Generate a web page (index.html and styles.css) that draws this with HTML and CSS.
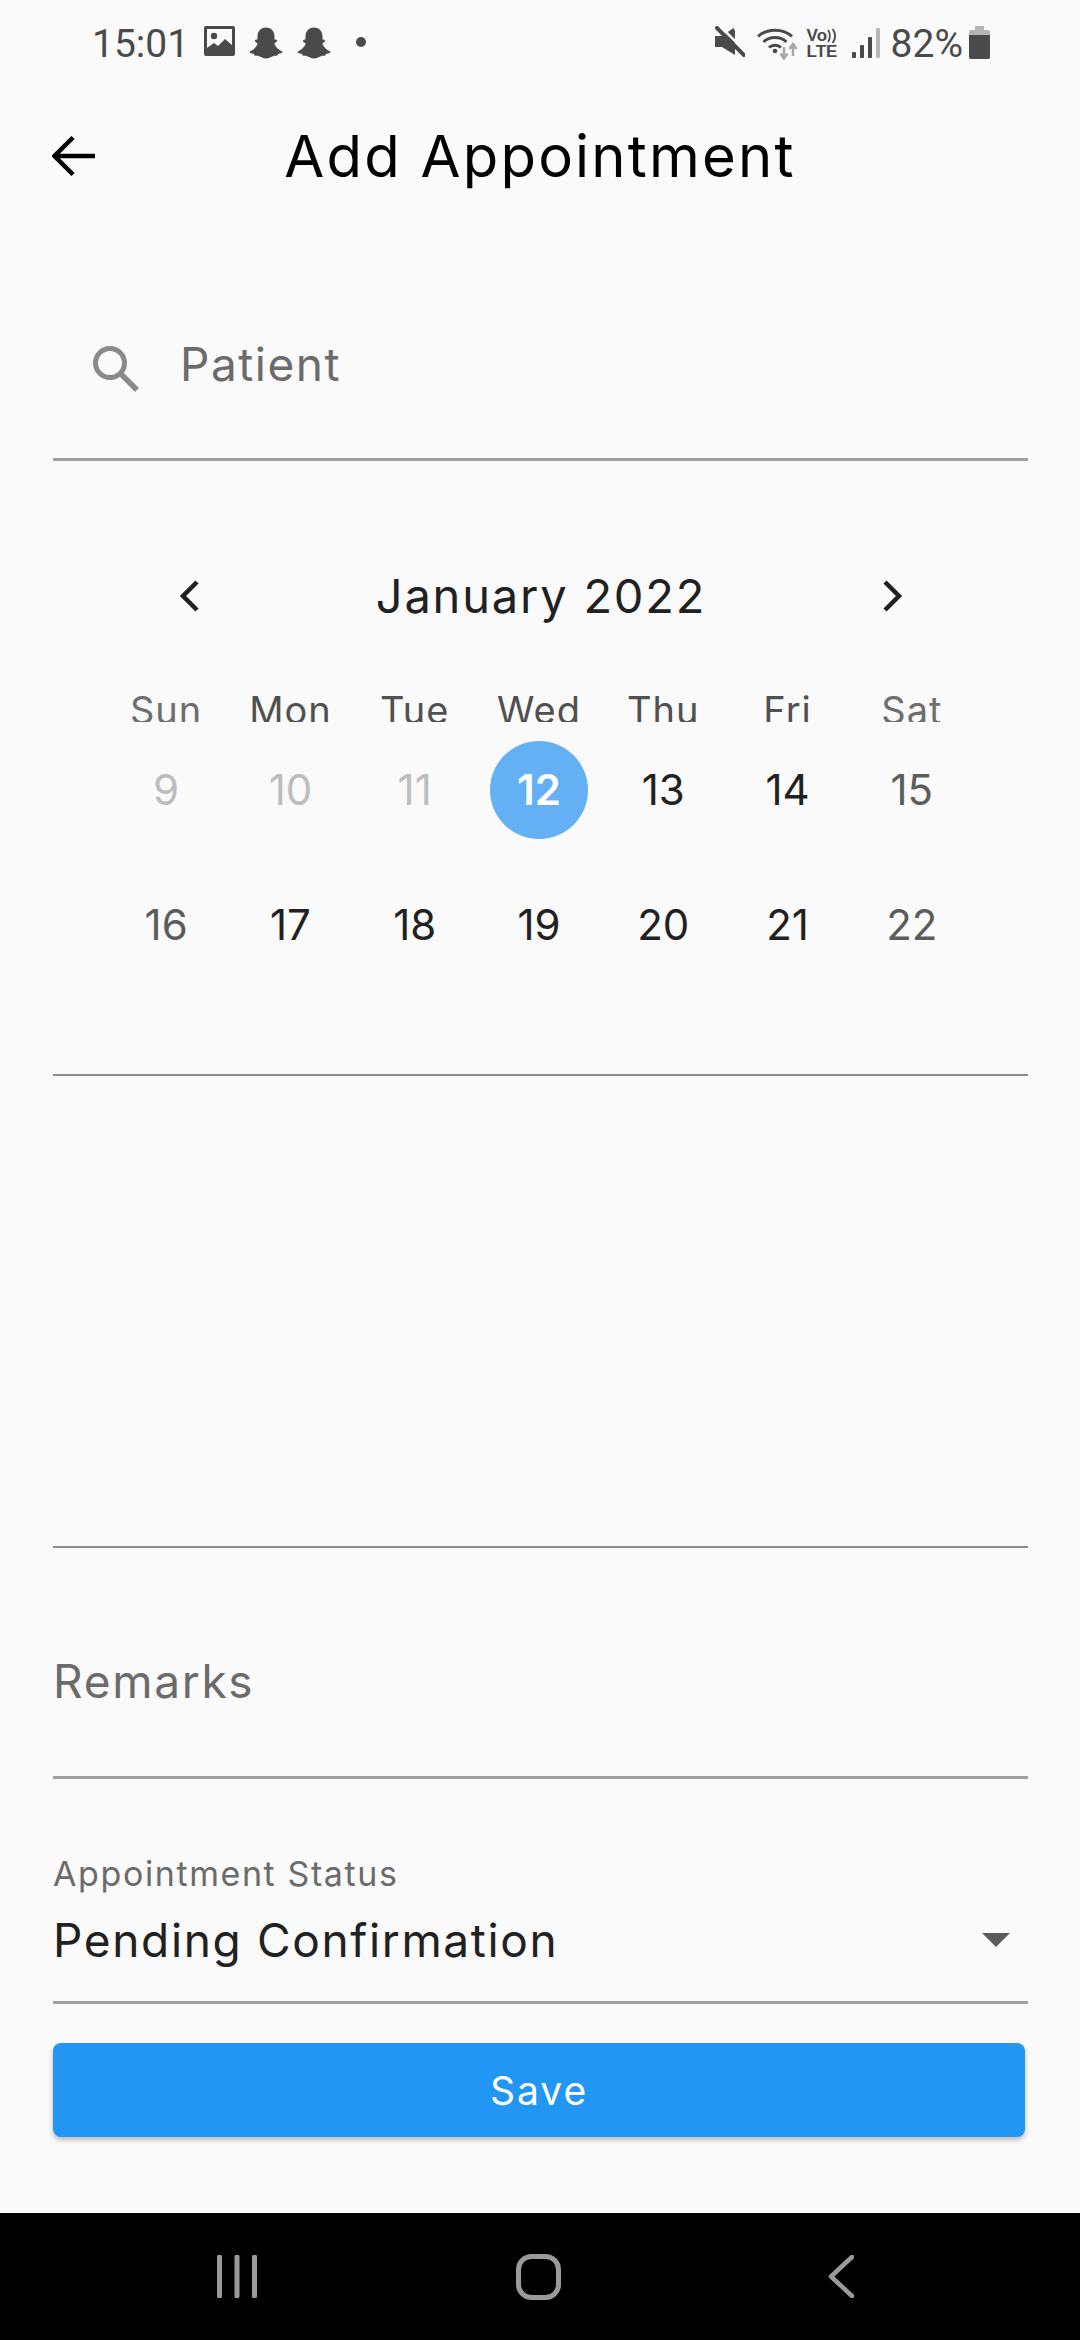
FILE: index.html
```html
<!DOCTYPE html>
<html lang="en">
<head>
    <meta charset="UTF-8">
    <meta name="viewport" content="width=device-width, initial-scale=1.0">
    <title>Add Appointment</title>
    <link rel="stylesheet" href="styles.css">
</head>
<body>
    <!-- Status Bar -->
    <div class="status-bar">
        <span class="status-time">15:01</span>
        <svg class="status-image" width="31" height="30" viewBox="0 0 31 30">
            <rect width="31" height="30" rx="2" fill="#4a4a4a"/>
            <rect x="3" y="3" width="25" height="24" fill="#fafafa"/>
            <circle cx="10" cy="10" r="3.2" fill="#4a4a4a"/>
            <path d="M3 27v-5l7-5 4 3 7-7 7 6v8z" fill="#4a4a4a"/>
        </svg>
        <svg class="status-ghost" width="34" height="32" viewBox="0 0 34 32">
            <path d="M17 .5C11.500 .5 8.500 4.500 8.500 9.500V12.500C7 12.500 5.500 13 6 14.500C6.500 15.500 8.500 15.500 8.500 16.500C8 19.500 4 23.500 .5 24.500C.5 26 2.500 26.500 5 27C5.500 28.500 6 29 7.500 28.800C10.500 28.500 12.500 31.500 17 31.500C21.500 31.500 23.500 28.500 26.500 28.800C28 29 28.500 28.500 29 27C31.500 26.500 33.500 26 33.500 24.500C30 23.500 26 19.500 25.500 16.500C25.500 15.500 27.500 15.500 28 14.500C28.500 13 27 12.500 25.500 12.500V9.500C25.500 4.500 22.500 .5 17 .5Z" fill="#4a4a4a"/>
        </svg>
        <svg class="status-ghost" width="34" height="32" viewBox="0 0 34 32">
            <path d="M17 .5C11.500 .5 8.500 4.500 8.500 9.500V12.500C7 12.500 5.500 13 6 14.500C6.500 15.500 8.500 15.500 8.500 16.500C8 19.500 4 23.500 .5 24.500C.5 26 2.500 26.500 5 27C5.500 28.500 6 29 7.500 28.800C10.500 28.500 12.500 31.500 17 31.500C21.500 31.500 23.500 28.500 26.500 28.800C28 29 28.500 28.500 29 27C31.500 26.500 33.500 26 33.500 24.500C30 23.500 26 19.500 25.500 16.500C25.500 15.500 27.500 15.500 28 14.500C28.500 13 27 12.500 25.500 12.500V9.500C25.500 4.500 22.500 .5 17 .5Z" fill="#4a4a4a"/>
        </svg>
        <span class="status-dot"></span>

        <div class="status-right">
            <svg class="status-mute" width="30" height="32" viewBox="0 0 30 32">
                <path d="M0 10h7L20 1v28L7 21H0z" fill="#4a4a4a"/>
                <path d="M18 1l3 0v6z" fill="#fafafa"/>
                <path d="M2 2l27 27" stroke="#4a4a4a" stroke-width="4" stroke-linecap="round"/>
                <path d="M6 1l25 25" stroke="#fafafa" stroke-width="2.500"/>
            </svg>
            <svg class="status-wifi" width="42" height="33" viewBox="0 0 42 33">
                <path d="M1 9.500C10 1 26 1 35 9.500" fill="none" stroke="#4a4a4a" stroke-width="3"/>
                <path d="M6.500 15C12.500 9 23.500 9 29.500 15" fill="none" stroke="#4a4a4a" stroke-width="3"/>
                <path d="M12 20.500C15 17.500 21 17.500 24 20.500" fill="none" stroke="#4a4a4a" stroke-width="3"/>
                <circle cx="18" cy="24" r="2.300" fill="#4a4a4a"/>
                <path d="M27 20v10M23.500 26.500l3.500 5 3.500-5M36 29V18M32.500 22l3.500-5 3.500 5" fill="none" stroke="#a8a8a8" stroke-width="2.500"/>
            </svg>
            <div class="status-volte">
                <span class="volte-top">Vo<svg width="9" height="14" viewBox="0 0 9 14"><path d="M1 1c2.500 3 2.500 9 0 12M5.500 0c3.500 4 3.500 10 0 14" fill="none" stroke="#4a4a4a" stroke-width="1.800"/></svg></span>
                <span class="volte-bottom">LTE</span>
            </div>
            <svg class="status-signal" width="28" height="30" viewBox="0 0 28 30">
                <rect x="0" y="24" width="4" height="6" rx="1" fill="#4a4a4a"/>
                <rect x="8" y="17" width="4" height="13" rx="1" fill="#4a4a4a"/>
                <rect x="16" y="9" width="4" height="21" rx="1" fill="#4a4a4a"/>
                <rect x="24" y="0" width="4" height="30" rx="1" fill="#b8b8b8"/>
            </svg>
            <span class="status-battery-text">82%</span>
            <svg class="status-battery" width="21" height="33" viewBox="0 0 21 33">
                <path d="M6 0h9v4h4a2 2 0 0 1 2 2v25a2 2 0 0 1-2 2H2a2 2 0 0 1-2-2V6a2 2 0 0 1 2-2h4z" fill="#b5b5b5"/>
                <path d="M0 9h21v22a2 2 0 0 1-2 2H2a2 2 0 0 1-2-2z" fill="#4a4a4a"/>
            </svg>
        </div>
    </div>

    <!-- App Bar -->
    <header class="app-bar">
        <svg class="back-arrow" width="44" height="42" viewBox="0 0 44 42">
            <path d="M43 21H4M21 2.500L2.500 21 21 39.500" fill="none" stroke="#000" stroke-width="4.500"/>
        </svg>
        <h1 class="app-title">Add Appointment</h1>
    </header>

    <main class="form">
        <!-- Patient Search -->
        <section class="search-field">
            <svg class="search-icon" width="46" height="46" viewBox="0 0 46 46">
                <circle cx="17" cy="17" r="14.500" fill="none" stroke="#8a8a8a" stroke-width="5"/>
                <path d="M27.500 27.500L44 44" stroke="#8a8a8a" stroke-width="5.500"/>
            </svg>
            <span class="search-placeholder">Patient</span>
        </section>

        <!-- Calendar -->
        <section class="calendar">
            <div class="calendar-head">
                <svg width="20" height="32" viewBox="0 0 20 32"><path d="M18 2L4 16l14 14" fill="none" stroke="#212121" stroke-width="4.500"/></svg>
                <span class="calendar-month">January 2022</span>
                <svg width="20" height="32" viewBox="0 0 20 32"><path d="M2 2l14 14L2 30" fill="none" stroke="#212121" stroke-width="4.500"/></svg>
            </div>
            <div class="calendar-weekdays">
                <span class="weekend-name">Sun</span>
                <span>Mon</span>
                <span>Tue</span>
                <span>Wed</span>
                <span>Thu</span>
                <span>Fri</span>
                <span class="weekend-name">Sat</span>
            </div>
            <div class="calendar-days">
                <span class="day day-disabled">9</span>
                <span class="day day-disabled">10</span>
                <span class="day day-disabled">11</span>
                <span class="day day-selected">12</span>
                <span class="day">13</span>
                <span class="day">14</span>
                <span class="day day-weekend">15</span>
                <span class="day day-weekend">16</span>
                <span class="day">17</span>
                <span class="day">18</span>
                <span class="day">19</span>
                <span class="day">20</span>
                <span class="day">21</span>
                <span class="day day-weekend">22</span>
            </div>
        </section>

        <section class="time-slots"></section>

        <section class="remarks-field">
            <span class="remarks-placeholder">Remarks</span>
        </section>

        <section class="status-field">
            <label class="status-label">Appointment Status</label>
            <div class="status-select">
                <span class="status-value">Pending Confirmation</span>
                <span class="select-caret"></span>
            </div>
        </section>

        <button class="btn-save">Save</button>
    </main>

    <!-- Navigation Bar -->
    <nav class="nav-bar">
        <svg width="40" height="43" viewBox="0 0 40 43">
            <path d="M2.500 2v39M20 2v39M37.500 2v39" stroke="#9a9a9a" stroke-width="5" stroke-linecap="round"/>
        </svg>
        <svg width="45" height="46" viewBox="0 0 45 46">
            <rect x="2.500" y="2.500" width="40" height="41" rx="13" fill="none" stroke="#9a9a9a" stroke-width="5"/>
        </svg>
        <svg width="26" height="43" viewBox="0 0 26 43">
            <path d="M24 2L3 21.500 24 41" fill="none" stroke="#9a9a9a" stroke-width="4.500" stroke-linecap="round" stroke-linejoin="round"/>
        </svg>
    </nav>
</body>
</html>
```

FILE: styles.css
```css
:root {
    --background-color: #fafafa;
    --text-color: #212121;
    --muted-color: #6b6b6b;
    --line-color: #a0a0a0;
    --primary-color: #2196f3;
    --status-color: #4a4a4a;
}

* {
    margin: 0;
    padding: 0;
    box-sizing: border-box;
}

body {
    width: 1080px;
    height: 2340px;
    display: flex;
    flex-direction: column;
    font-family: Inter, "Open Sans", sans-serif;
    background-color: var(--background-color);
    color: var(--text-color);
    overflow: hidden;
}

/* Status Bar */
.status-bar {
    height: 88px;
    flex: none;
    display: flex;
    align-items: center;
    padding: 0 90px 0 92px;
    color: var(--status-color);
    font-family: Roboto, sans-serif;
}

.status-time {
    font-size: 39px;
    line-height: 88px;
}

.status-image {
    margin-left: 15px;
    margin-top: -6px;
}

.status-ghost {
    margin-left: 14px;
    margin-top: -3px;
}

.status-dot {
    width: 10px;
    height: 10px;
    margin-left: 25px;
    margin-top: -5px;
    border-radius: 50%;
    background-color: var(--status-color);
}

.status-right {
    margin-left: auto;
    display: flex;
    align-items: center;
}

.status-mute {
    margin-top: -4px;
}

.status-wifi {
    margin-left: 12px;
    margin-top: -2px;
}

.status-volte {
    width: 32px;
    margin-left: 8px;
    display: flex;
    flex-direction: column;
    font-family: "Liberation Sans", sans-serif;
    font-weight: 700;
    font-size: 17px;
    line-height: 16px;
}

.volte-top {
    display: flex;
    align-items: center;
}

.status-signal {
    margin-left: 13px;
    margin-top: -2px;
}

.status-battery-text {
    margin-left: 11px;
    font-size: 39px;
    line-height: 88px;
}

.status-battery {
    margin-left: 6px;
    margin-top: -3px;
}

/* App Bar */
.app-bar {
    height: 136px;
    flex: none;
    display: grid;
    grid-template-columns: 1fr auto 1fr;
    align-items: center;
    padding: 0 52px;
}

.app-title {
    font-size: 58px;
    font-weight: 400;
    color: #000;
    letter-spacing: 2.2px;
    white-space: nowrap;
}

/* Form */
.form {
    flex: 1;
    display: flex;
    flex-direction: column;
    padding: 0 52px 0 53px;
}

.search-field {
    height: 237px;
    flex: none;
    display: flex;
    align-items: center;
    padding: 45px 0 0 40px;
    border-bottom: 3px solid var(--line-color);
}

.search-icon {
    margin-top: 10px;
}

.search-placeholder {
    margin-left: 41px;
    font-size: 46px;
    line-height: 56px;
    color: var(--muted-color);
    letter-spacing: 1.5px;
}

/* Calendar */
.calendar {
    height: 615px;
    flex: none;
    padding: 105px 54px 0 51px;
    border-bottom: 2px solid #8c8c8c;
}

.calendar-head {
    height: 60px;
    display: flex;
    justify-content: space-between;
    align-items: center;
    padding: 0 71px 0 75px;
}

.calendar-month {
    font-size: 47px;
    line-height: 60px;
    letter-spacing: 1.8px;
}

/* Row is cut at the bottom, the dates sit right under the names */
.calendar-weekdays {
    height: 96px;
    display: grid;
    grid-template-columns: repeat(7, 1fr);
    text-align: center;
    font-size: 38px;
    line-height: 54px;
    letter-spacing: 1px;
    padding-top: 57px;
    overflow: hidden;
    color: #505050;
}

.weekend-name {
    color: #6e6e6e;
}

.calendar-days {
    display: grid;
    grid-template-columns: repeat(7, 1fr);
    grid-auto-rows: 135px;
    justify-items: center;
    align-items: center;
}

.day {
    width: 98px;
    height: 98px;
    display: flex;
    justify-content: center;
    align-items: center;
    border-radius: 50%;
    font-size: 42px;
}

.day-disabled {
    color: #bdbdbd;
}

.day-weekend {
    color: #5c5c5c;
}

.day-selected {
    background-color: #63b0f4;
    color: white;
    font-weight: 600;
}

.time-slots {
    height: 472px;
    flex: none;
    border-bottom: 2px solid #8c8c8c;
}

.remarks-field {
    height: 231px;
    flex: none;
    padding-top: 105px;
    border-bottom: 3px solid var(--line-color);
}

.remarks-placeholder {
    display: block;
    font-size: 46px;
    line-height: 56px;
    color: var(--muted-color);
    letter-spacing: 1.7px;
}

.status-field {
    height: 225px;
    flex: none;
    padding-top: 75px;
    border-bottom: 3px solid var(--line-color);
}

.status-label {
    display: block;
    font-size: 34px;
    line-height: 40px;
    letter-spacing: 1.6px;
    color: var(--muted-color);
}

.status-select {
    display: flex;
    justify-content: space-between;
    align-items: center;
    margin-top: 18px;
    padding-right: 18px;
}

.status-value {
    font-size: 46px;
    line-height: 56px;
    letter-spacing: 1.65px;
}

.select-caret {
    width: 0;
    height: 0;
    border-left: 14px solid transparent;
    border-right: 14px solid transparent;
    border-top: 14px solid #5c5c5c;
}

.btn-save {
    height: 94px;
    width: 972px;
    flex: none;
    margin-top: 39px;
    border: none;
    border-radius: 8px;
    background-color: var(--primary-color);
    color: white;
    font-family: inherit;
    font-size: 39px;
    font-weight: 400;
    letter-spacing: 2px;
    box-shadow: 0 3px 5px rgba(0, 0, 0, 0.25);
}

/* Navigation Bar */
.nav-bar {
    height: 127px;
    flex: none;
    display: flex;
    align-items: center;
    padding-left: 217px;
    gap: 259px;
    background-color: #000;
}

.nav-bar svg:last-child {
    margin-left: 8px;
}
```
